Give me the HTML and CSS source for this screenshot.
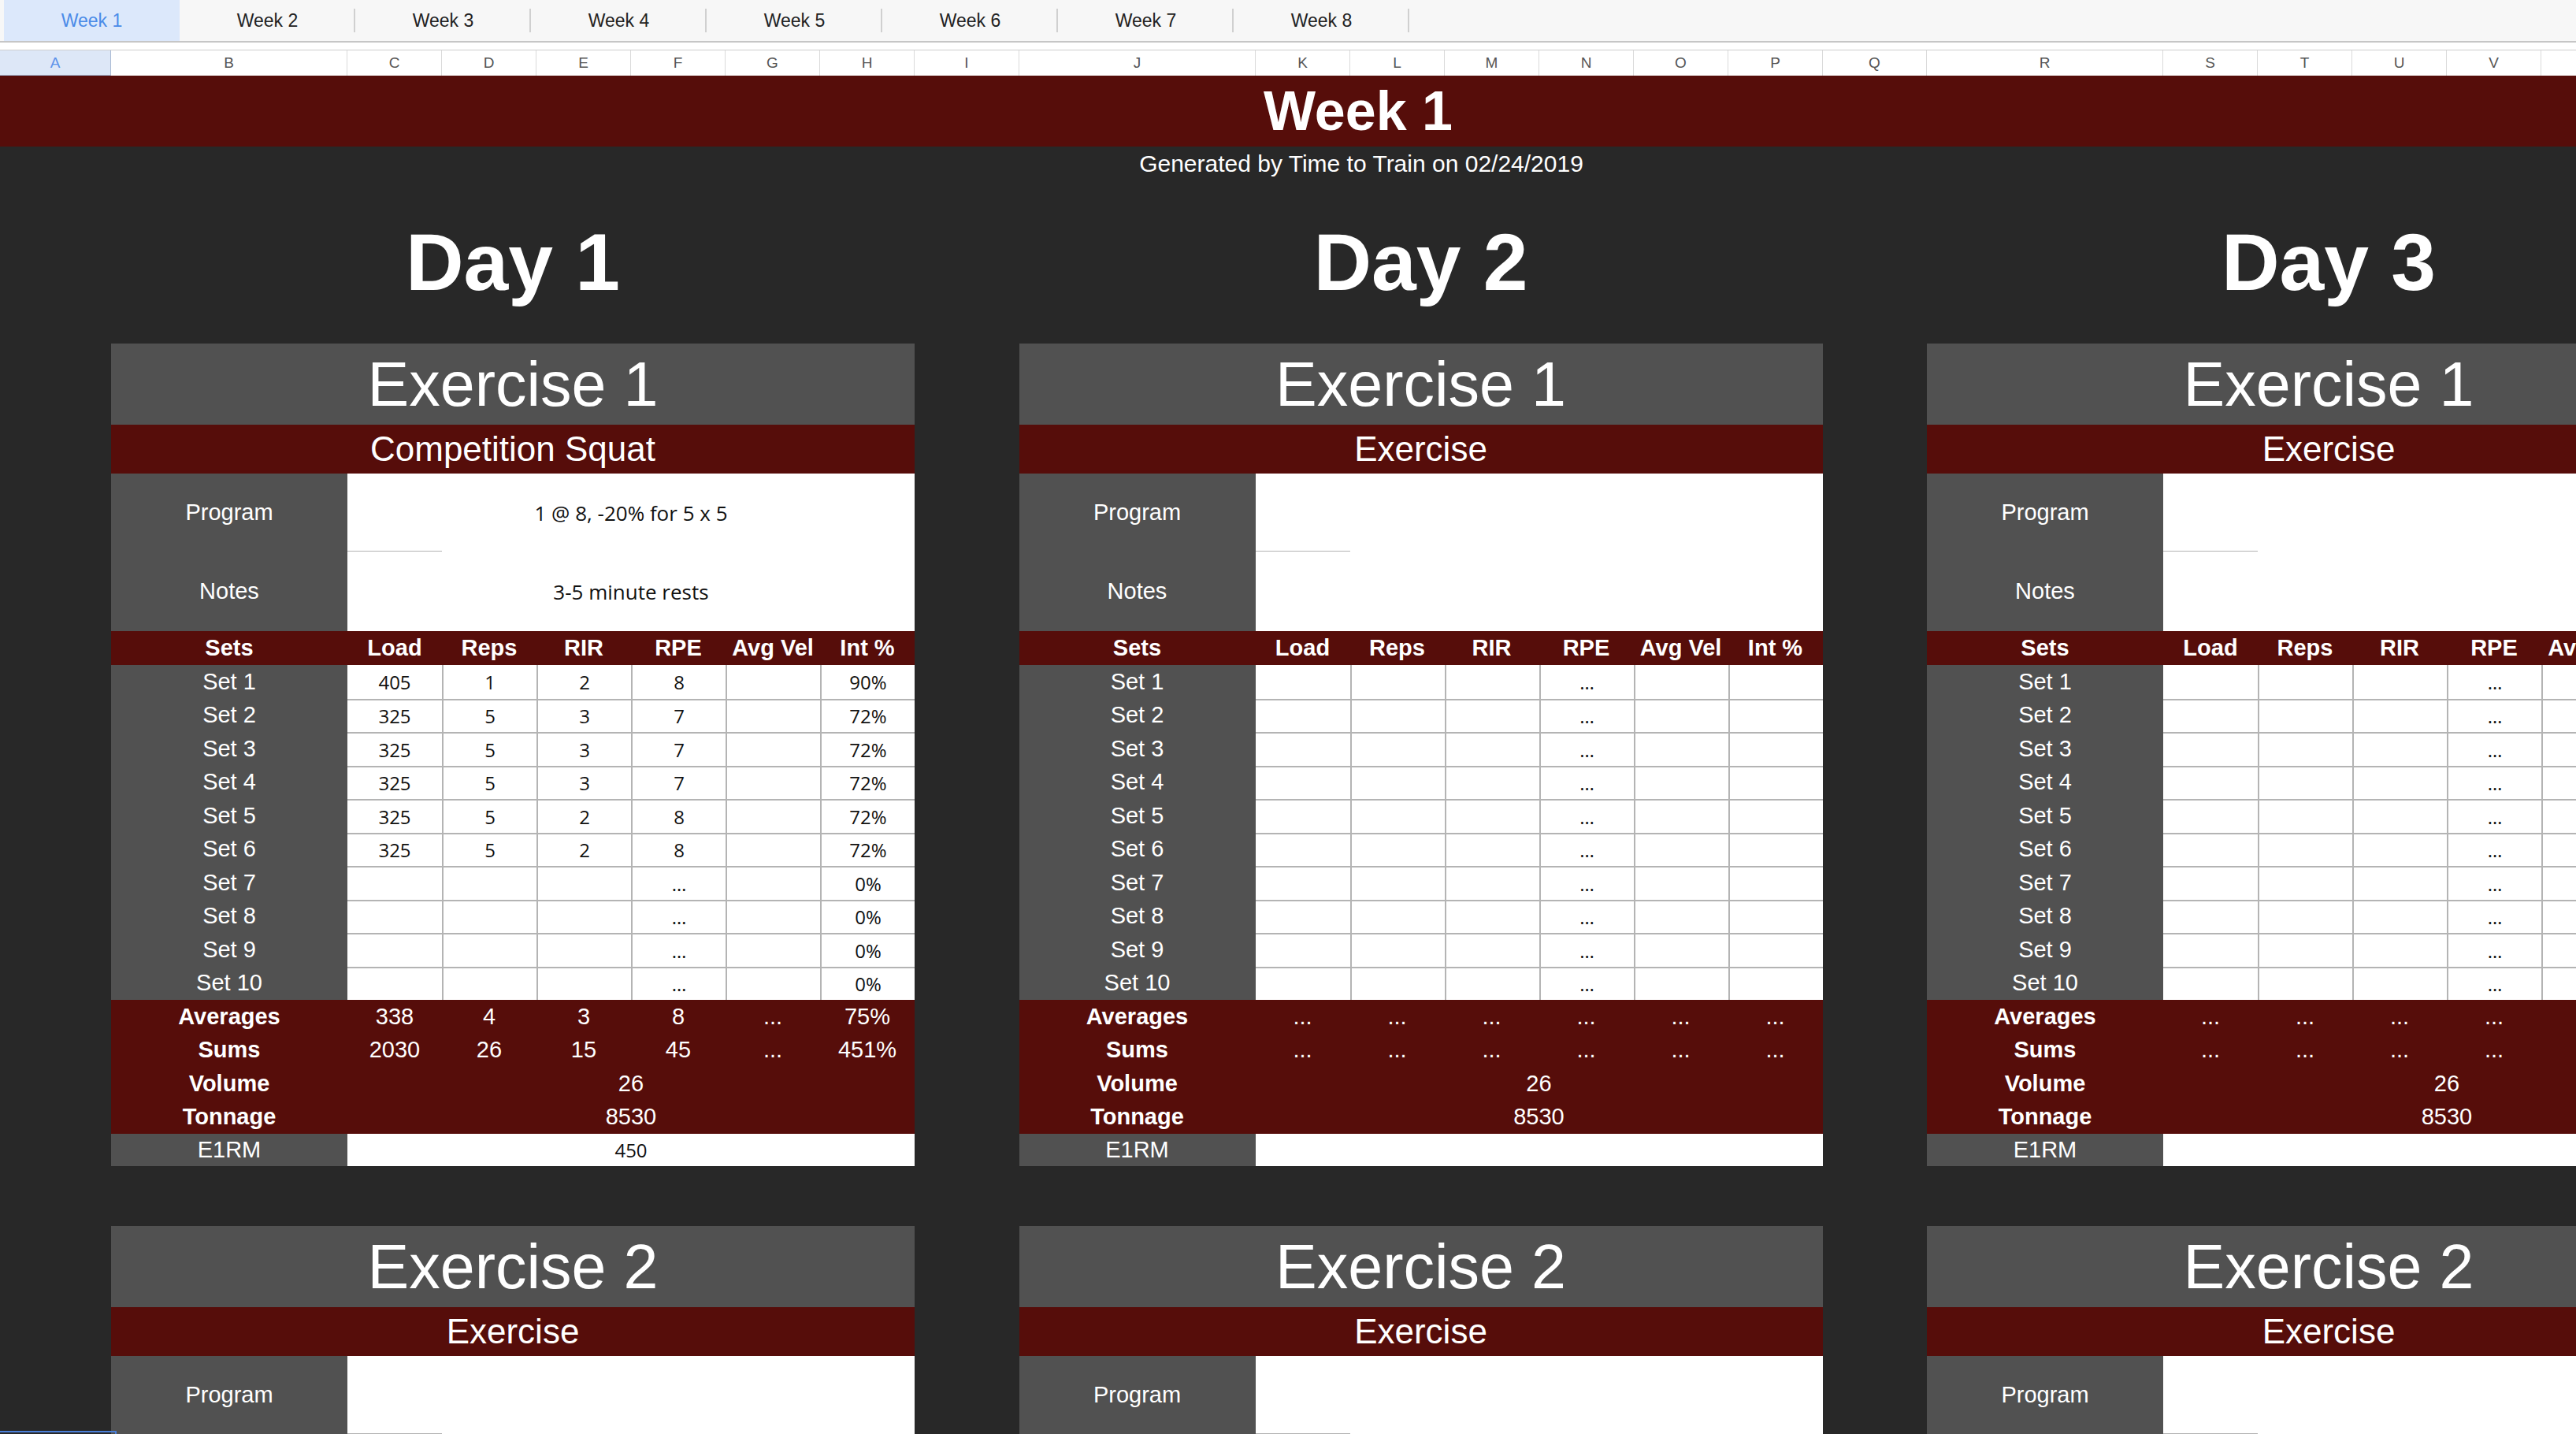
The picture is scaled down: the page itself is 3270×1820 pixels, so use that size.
FILE: index.html
```html
<!DOCTYPE html>
<html lang="en">
<head>
<meta charset="utf-8">
<title>Week 1</title>
<link rel="stylesheet" href="styles.css">
</head>
<body>
<div class="tabbar">
  <div class="tab active">Week 1</div>
  <div class="tab">Week 2</div>
  <div class="tab">Week 3</div>
  <div class="tab">Week 4</div>
  <div class="tab">Week 5</div>
  <div class="tab">Week 6</div>
  <div class="tab">Week 7</div>
  <div class="tab">Week 8</div>
</div>
<div class="strip"></div>
<div class="colhead">
  <div class="col sel">A</div><div class="col">B</div><div class="col">C</div><div class="col">D</div><div class="col">E</div><div class="col">F</div><div class="col">G</div><div class="col">H</div><div class="col">I</div><div class="col">J</div><div class="col">K</div><div class="col">L</div><div class="col">M</div><div class="col">N</div><div class="col">O</div><div class="col">P</div><div class="col">Q</div><div class="col">R</div><div class="col">S</div><div class="col">T</div><div class="col">U</div><div class="col">V</div><div class="col">W</div>
</div>
<div class="sheet">
  <div class="week-band">Week 1</div>
  <div class="generated">Generated by Time to Train on 02/24/2019</div>
  <div class="days">
    <!-- DAY 1 -->
    <div class="day">
      <div class="day-title">Day 1</div>
      <div class="card">
        <div class="card-title">Exercise 1</div>
        <div class="card-name">Competition Squat</div>
        <div class="info prog"><div class="lbl">Program</div><div class="val">1 @ 8, -20% for 5 x 5</div></div>
        <div class="info notes"><div class="lbl">Notes</div><div class="val">3-5 minute rests</div></div>
        <div class="grid-row thead"><div>Sets</div><div>Load</div><div>Reps</div><div>RIR</div><div>RPE</div><div>Avg Vel</div><div>Int %</div></div>
        <div class="grid-row set"><div class="lbl">Set 1</div><div class="c">405</div><div class="c">1</div><div class="c">2</div><div class="c">8</div><div class="c"></div><div class="c">90%</div></div>
        <div class="grid-row set"><div class="lbl">Set 2</div><div class="c">325</div><div class="c">5</div><div class="c">3</div><div class="c">7</div><div class="c"></div><div class="c">72%</div></div>
        <div class="grid-row set"><div class="lbl">Set 3</div><div class="c">325</div><div class="c">5</div><div class="c">3</div><div class="c">7</div><div class="c"></div><div class="c">72%</div></div>
        <div class="grid-row set"><div class="lbl">Set 4</div><div class="c">325</div><div class="c">5</div><div class="c">3</div><div class="c">7</div><div class="c"></div><div class="c">72%</div></div>
        <div class="grid-row set"><div class="lbl">Set 5</div><div class="c">325</div><div class="c">5</div><div class="c">2</div><div class="c">8</div><div class="c"></div><div class="c">72%</div></div>
        <div class="grid-row set"><div class="lbl">Set 6</div><div class="c">325</div><div class="c">5</div><div class="c">2</div><div class="c">8</div><div class="c"></div><div class="c">72%</div></div>
        <div class="grid-row set"><div class="lbl">Set 7</div><div class="c"></div><div class="c"></div><div class="c"></div><div class="c">…</div><div class="c"></div><div class="c">0%</div></div>
        <div class="grid-row set"><div class="lbl">Set 8</div><div class="c"></div><div class="c"></div><div class="c"></div><div class="c">…</div><div class="c"></div><div class="c">0%</div></div>
        <div class="grid-row set"><div class="lbl">Set 9</div><div class="c"></div><div class="c"></div><div class="c"></div><div class="c">…</div><div class="c"></div><div class="c">0%</div></div>
        <div class="grid-row set"><div class="lbl">Set 10</div><div class="c"></div><div class="c"></div><div class="c"></div><div class="c">…</div><div class="c"></div><div class="c">0%</div></div>
        <div class="sum">
          <div class="grid-row srow"><div class="slbl">Averages</div><div>338</div><div>4</div><div>3</div><div>8</div><div>...</div><div>75%</div></div>
          <div class="grid-row srow"><div class="slbl">Sums</div><div>2030</div><div>26</div><div>15</div><div>45</div><div>...</div><div>451%</div></div>
          <div class="grid-row srow"><div class="slbl">Volume</div><div class="wide">26</div></div>
          <div class="grid-row srow"><div class="slbl">Tonnage</div><div class="wide">8530</div></div>
        </div>
        <div class="grid-row e1rm"><div class="lbl">E1RM</div><div class="val">450</div></div>
      </div>
      <div class="card">
        <div class="card-title">Exercise 2</div>
        <div class="card-name">Exercise</div>
        <div class="info prog"><div class="lbl">Program</div><div class="val"></div></div>
        <div class="info notes"><div class="lbl">Notes</div><div class="val"></div></div>
      </div>
    </div>
    <!-- DAY 2 -->
    <div class="day">
      <div class="day-title">Day 2</div>
      <div class="card">
        <div class="card-title">Exercise 1</div>
        <div class="card-name">Exercise</div>
        <div class="info prog"><div class="lbl">Program</div><div class="val"></div></div>
        <div class="info notes"><div class="lbl">Notes</div><div class="val"></div></div>
        <div class="grid-row thead"><div>Sets</div><div>Load</div><div>Reps</div><div>RIR</div><div>RPE</div><div>Avg Vel</div><div>Int %</div></div>
        <div class="grid-row set"><div class="lbl">Set 1</div><div class="c"></div><div class="c"></div><div class="c"></div><div class="c">…</div><div class="c"></div><div class="c"></div></div>
        <div class="grid-row set"><div class="lbl">Set 2</div><div class="c"></div><div class="c"></div><div class="c"></div><div class="c">…</div><div class="c"></div><div class="c"></div></div>
        <div class="grid-row set"><div class="lbl">Set 3</div><div class="c"></div><div class="c"></div><div class="c"></div><div class="c">…</div><div class="c"></div><div class="c"></div></div>
        <div class="grid-row set"><div class="lbl">Set 4</div><div class="c"></div><div class="c"></div><div class="c"></div><div class="c">…</div><div class="c"></div><div class="c"></div></div>
        <div class="grid-row set"><div class="lbl">Set 5</div><div class="c"></div><div class="c"></div><div class="c"></div><div class="c">…</div><div class="c"></div><div class="c"></div></div>
        <div class="grid-row set"><div class="lbl">Set 6</div><div class="c"></div><div class="c"></div><div class="c"></div><div class="c">…</div><div class="c"></div><div class="c"></div></div>
        <div class="grid-row set"><div class="lbl">Set 7</div><div class="c"></div><div class="c"></div><div class="c"></div><div class="c">…</div><div class="c"></div><div class="c"></div></div>
        <div class="grid-row set"><div class="lbl">Set 8</div><div class="c"></div><div class="c"></div><div class="c"></div><div class="c">…</div><div class="c"></div><div class="c"></div></div>
        <div class="grid-row set"><div class="lbl">Set 9</div><div class="c"></div><div class="c"></div><div class="c"></div><div class="c">…</div><div class="c"></div><div class="c"></div></div>
        <div class="grid-row set"><div class="lbl">Set 10</div><div class="c"></div><div class="c"></div><div class="c"></div><div class="c">…</div><div class="c"></div><div class="c"></div></div>
        <div class="sum">
          <div class="grid-row srow"><div class="slbl">Averages</div><div>...</div><div>...</div><div>...</div><div>...</div><div>...</div><div>...</div></div>
          <div class="grid-row srow"><div class="slbl">Sums</div><div>...</div><div>...</div><div>...</div><div>...</div><div>...</div><div>...</div></div>
          <div class="grid-row srow"><div class="slbl">Volume</div><div class="wide">26</div></div>
          <div class="grid-row srow"><div class="slbl">Tonnage</div><div class="wide">8530</div></div>
        </div>
        <div class="grid-row e1rm"><div class="lbl">E1RM</div><div class="val"></div></div>
      </div>
      <div class="card">
        <div class="card-title">Exercise 2</div>
        <div class="card-name">Exercise</div>
        <div class="info prog"><div class="lbl">Program</div><div class="val"></div></div>
        <div class="info notes"><div class="lbl">Notes</div><div class="val"></div></div>
      </div>
    </div>
    <!-- DAY 3 -->
    <div class="day">
      <div class="day-title">Day 3</div>
      <div class="card">
        <div class="card-title">Exercise 1</div>
        <div class="card-name">Exercise</div>
        <div class="info prog"><div class="lbl">Program</div><div class="val"></div></div>
        <div class="info notes"><div class="lbl">Notes</div><div class="val"></div></div>
        <div class="grid-row thead"><div>Sets</div><div>Load</div><div>Reps</div><div>RIR</div><div>RPE</div><div>Avg Vel</div><div>Int %</div></div>
        <div class="grid-row set"><div class="lbl">Set 1</div><div class="c"></div><div class="c"></div><div class="c"></div><div class="c">…</div><div class="c"></div><div class="c"></div></div>
        <div class="grid-row set"><div class="lbl">Set 2</div><div class="c"></div><div class="c"></div><div class="c"></div><div class="c">…</div><div class="c"></div><div class="c"></div></div>
        <div class="grid-row set"><div class="lbl">Set 3</div><div class="c"></div><div class="c"></div><div class="c"></div><div class="c">…</div><div class="c"></div><div class="c"></div></div>
        <div class="grid-row set"><div class="lbl">Set 4</div><div class="c"></div><div class="c"></div><div class="c"></div><div class="c">…</div><div class="c"></div><div class="c"></div></div>
        <div class="grid-row set"><div class="lbl">Set 5</div><div class="c"></div><div class="c"></div><div class="c"></div><div class="c">…</div><div class="c"></div><div class="c"></div></div>
        <div class="grid-row set"><div class="lbl">Set 6</div><div class="c"></div><div class="c"></div><div class="c"></div><div class="c">…</div><div class="c"></div><div class="c"></div></div>
        <div class="grid-row set"><div class="lbl">Set 7</div><div class="c"></div><div class="c"></div><div class="c"></div><div class="c">…</div><div class="c"></div><div class="c"></div></div>
        <div class="grid-row set"><div class="lbl">Set 8</div><div class="c"></div><div class="c"></div><div class="c"></div><div class="c">…</div><div class="c"></div><div class="c"></div></div>
        <div class="grid-row set"><div class="lbl">Set 9</div><div class="c"></div><div class="c"></div><div class="c"></div><div class="c">…</div><div class="c"></div><div class="c"></div></div>
        <div class="grid-row set"><div class="lbl">Set 10</div><div class="c"></div><div class="c"></div><div class="c"></div><div class="c">…</div><div class="c"></div><div class="c"></div></div>
        <div class="sum">
          <div class="grid-row srow"><div class="slbl">Averages</div><div>...</div><div>...</div><div>...</div><div>...</div><div>...</div><div>...</div></div>
          <div class="grid-row srow"><div class="slbl">Sums</div><div>...</div><div>...</div><div>...</div><div>...</div><div>...</div><div>...</div></div>
          <div class="grid-row srow"><div class="slbl">Volume</div><div class="wide">26</div></div>
          <div class="grid-row srow"><div class="slbl">Tonnage</div><div class="wide">8530</div></div>
        </div>
        <div class="grid-row e1rm"><div class="lbl">E1RM</div><div class="val"></div></div>
      </div>
      <div class="card">
        <div class="card-title">Exercise 2</div>
        <div class="card-name">Exercise</div>
        <div class="info prog"><div class="lbl">Program</div><div class="val"></div></div>
        <div class="info notes"><div class="lbl">Notes</div><div class="val"></div></div>
      </div>
    </div>
  </div>
</div>
<div class="selection"></div>
</body>
</html>
```

FILE: styles.css
```css
html, body {
  margin: 0;
  padding: 0;
}
body {
  width: 3270px;
  height: 1820px;
  overflow: hidden;
  position: relative;
  background: #282828;
  font-family: "Liberation Sans", Arial, sans-serif;
}

/* ---------- sheet tabs ---------- */
.tabbar {
  display: flex;
  height: 52px;
  padding-left: 5px;
  background: #f7f7f7;
  border-bottom: 2px solid #c6c6c6;
}
.tab {
  position: relative;
  flex: none;
  width: 223px;
  display: flex;
  align-items: center;
  justify-content: center;
  font-size: 23px;
  color: #222;
}
.tab.active {
  background: #dce8fb;
  color: #4a8be8;
}
.tab:not(.active)::after {
  content: "";
  position: absolute;
  right: 0;
  top: 11px;
  width: 2px;
  height: 30px;
  background: #d0d0d0;
}
.strip {
  height: 9px;
  background: #fff;
}

/* ---------- column headers ---------- */
.colhead {
  display: grid;
  grid-template-columns: 141px 300px repeat(6, 120px) 133px 300px repeat(6, 120px) 132px 300px repeat(5, 120px);
  height: 33px;
  background: #fff;
  border-top: 1px solid #cfcfcf;
  box-sizing: border-box;
}
.col {
  display: flex;
  align-items: center;
  justify-content: center;
  font-size: 19px;
  color: #555;
  border-right: 1px solid #dadada;
  box-sizing: border-box;
}
.col.sel {
  background: #dde7f7;
  color: #5b92ea;
  border-right: 1px solid #a9b9d3;
  border-bottom: 1px solid #a9b9d3;
}

/* ---------- sheet ---------- */
.sheet {
  background: #282828;
  color: #fff;
}
.week-band {
  height: 90px;
  background: #560d0a;
  display: flex;
  align-items: center;
  justify-content: center;
  padding-left: 178px;
  font-size: 70px;
  font-weight: bold;
}
.generated {
  height: 44px;
  line-height: 44px;
  text-align: center;
  padding-left: 186px;
  font-size: 30px;
}
.days {
  display: flex;
  gap: 132.5px;
  padding-left: 141px;
}
.day {
  flex: none;
  width: 1020px;
}
.day-title {
  height: 206px;
  display: flex;
  align-items: center;
  justify-content: center;
  font-size: 102px;
  font-weight: bold;
}

/* ---------- exercise card ---------- */
.card + .card {
  margin-top: 76px;
}
.card-title {
  height: 103px;
  background: #515151;
  display: flex;
  align-items: center;
  justify-content: center;
  font-size: 79px;
}
.card-name {
  height: 62px;
  background: #560d0a;
  display: flex;
  align-items: center;
  justify-content: center;
  font-size: 44px;
}
.info,
.grid-row {
  display: grid;
  grid-template-columns: 300px repeat(6, 120px);
}
.info > .val {
  grid-column: 2 / 8;
}
.prog {
  height: 99px;
}
.notes {
  height: 101px;
}
.lbl {
  background: #515151;
  display: flex;
  align-items: center;
  justify-content: center;
  font-size: 29px;
  color: #fff;
}
.val {
  position: relative;
  background: #fff;
  color: #111;
  display: flex;
  align-items: center;
  justify-content: center;
  font-family: "Open Sans", "Liberation Sans", sans-serif;
  font-size: 26px;
}
.prog > .val::after {
  content: "";
  position: absolute;
  left: 0;
  bottom: -1px;
  width: 120px;
  height: 2px;
  background: #b2b2b2;
}

/* table header */
.thead {
  height: 43px;
  background: #560d0a;
}
.thead > div {
  display: flex;
  align-items: center;
  justify-content: center;
  font-size: 29px;
  font-weight: bold;
}

/* set rows */
.set {
  height: 42.5px;
}
.set > .c {
  background: #fff;
  color: #111;
  display: flex;
  align-items: center;
  justify-content: center;
  font-family: "Open Sans", "Liberation Sans", sans-serif;
  font-size: 24px;
  border-left: 2px solid #b4b4b4;
  box-sizing: border-box;
}
.set > .c:nth-child(2) {
  border-left: 0;
}
.set + .set > .c {
  border-top: 2px solid #b4b4b4;
}

/* summary */
.sum {
  background: #560d0a;
}
.srow {
  height: 42.5px;
}
.srow > div {
  display: flex;
  align-items: center;
  justify-content: center;
  font-size: 29px;
}
.srow > .slbl {
  font-weight: bold;
}
.srow > .wide {
  grid-column: 2 / 8;
}

/* e1rm */
.e1rm {
  height: 41px;
}
.e1rm > .val {
  grid-column: 2 / 8;
  font-size: 24px;
}

/* selection marker at the bottom-left */
.selection {
  position: absolute;
  left: -2px;
  top: 1816px;
  width: 146px;
  height: 40px;
  border: 2px solid #4a7fd8;
}
```
